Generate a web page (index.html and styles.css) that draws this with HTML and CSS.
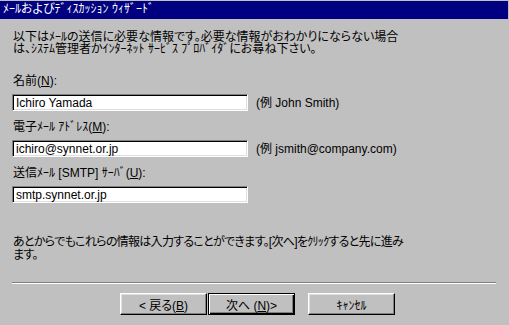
FILE: index.html
```html
<!DOCTYPE html>
<html lang="ja">
<head>
    <meta charset="UTF-8">
    <title>ﾒｰﾙおよびﾃﾞｨｽｶｯｼｮﾝ ｳｨｻﾞｰﾄﾞ</title>
    <link rel="stylesheet" href="styles.css">
</head>
<body>
    <div class="dialog">
        <div class="titlebar">ﾒｰﾙおよびﾃﾞｨｽｶｯｼｮﾝ ｳｨｻﾞｰﾄﾞ</div>
        <div class="content">
            <p class="intro">以下はﾒｰﾙの送信に必要な情報です。必要な情報がおわかりにならない場合<br>は、ｼｽﾃﾑ管理者かｲﾝﾀｰﾈｯﾄ ｻｰﾋﾞｽ ﾌﾟﾛﾊﾞｲﾀﾞにお尋ね下さい。</p>
            <div class="field">
                <label class="field-label">名前(<u>N</u>):</label>
                <div class="field-row">
                    <input class="text-input" type="text" value="Ichiro Yamada">
                    <span class="hint">(例 John Smith)</span>
                </div>
            </div>
            <div class="field">
                <label class="field-label">電子ﾒｰﾙ ｱﾄﾞﾚｽ(<u>M</u>):</label>
                <div class="field-row">
                    <input class="text-input" type="text" value="ichiro@synnet.or.jp">
                    <span class="hint">(例 jsmith@company.com)</span>
                </div>
            </div>
            <div class="field">
                <label class="field-label">送信ﾒｰﾙ [SMTP] ｻｰﾊﾞ(<u>U</u>):</label>
                <div class="field-row">
                    <input class="text-input" type="text" value="smtp.synnet.or.jp">
                </div>
            </div>
            <p class="note">あとからでもこれらの情報は入力することができます。[次へ]をｸﾘｯｸすると先に進み<br>ます。</p>
        </div>
        <div class="separator"></div>
        <div class="buttons">
            <button class="btn">&lt; 戻る(<u>B</u>)</button>
            <button class="btn btn-default">次へ (<u>N</u>)&gt;</button>
            <button class="btn btn-cancel">ｷｬﾝｾﾙ</button>
        </div>
    </div>
</body>
</html>
```

FILE: styles.css
```css
body {
    margin: 0;
    padding: 0;
    background: #c0c0c0;
    font-family: "Liberation Sans", "Noto Sans CJK JP", sans-serif;
    font-size: 12px;
    font-feature-settings: "palt";
    color: #000;
}
.dialog {
    width: 509px;
    height: 325px;
    background: #c0c0c0;
    overflow: hidden;
}
.titlebar {
    margin-top: 1px;
    width: 505px;
    height: 18px;
    padding-left: 3px;
    background: #000080;
    color: #fff;
    line-height: 17px;
}
.content {
    padding: 0 12px 0 13px;
}
.intro {
    margin: 12px 0 20px 0;
    line-height: 12px;
}
.field {
    margin-bottom: 10px;
}
.field-label {
    display: block;
    line-height: 12px;
    margin-bottom: 7px;
}
.field-row {
    display: flex;
    align-items: center;
    gap: 8px;
    margin-left: -1px;
}
.text-input {
    box-sizing: border-box;
    width: 236px;
    height: 17px;
    margin: 0;
    padding: 0 3px;
    font-family: inherit;
    font-size: 12px;
    color: #000;
    background: #fff;
    border-style: solid;
    border-width: 1px;
    border-color: #808080 #fff #fff #808080;
    box-shadow: inset 1px 1px #000, inset -1px -1px #dfdfdf;
    outline: none;
}
.hint {
    line-height: 12px;
}
.note {
    margin: 33px 0 0 0;
    line-height: 13px;
    letter-spacing: -0.7px;
}
.separator {
    margin: 20px 13px 0 12px;
    border-top: 1px solid #808080;
    border-bottom: 1px solid #fff;
}
.buttons {
    display: flex;
    padding-left: 120px;
    margin-top: 9px;
}
.btn {
    box-sizing: border-box;
    width: 87px;
    height: 22px;
    margin: 0;
    padding: 0;
    font-family: inherit;
    font-size: 12px;
    font-feature-settings: "palt";
    color: #000;
    background: #c0c0c0;
    border-style: solid;
    border-width: 1px;
    border-color: #fff #000 #000 #fff;
    box-shadow: inset -1px -1px #808080, inset 1px 1px #dfdfdf;
}
.btn-default {
    margin-left: 1px;
    border-color: #000;
    box-shadow: inset 1px 1px #fff, inset -1px -1px #000, inset -2px -2px #808080;
}
.btn-cancel {
    margin-left: 13px;
}
```
